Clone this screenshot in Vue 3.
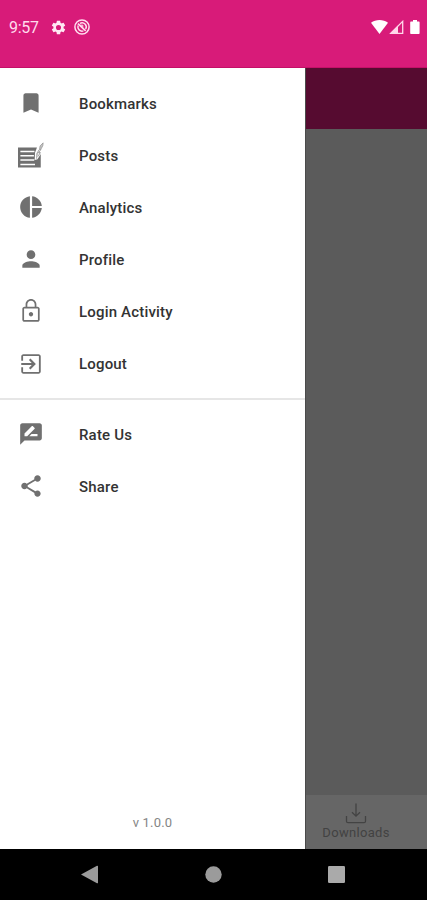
<template>
  <div class="screen">
    <header class="status-bar">
      <span class="clock">9:57</span>
      <svg class="gear" width="17" height="17" viewBox="0 0 24 24" fill="#ffe9f4"><path d="M19.14 12.94c.04-.3.06-.61.06-.94 0-.32-.02-.64-.07-.94l2.03-1.58a.49.49 0 0 0 .12-.61l-1.92-3.32a.49.49 0 0 0-.59-.22l-2.39.96a7.03 7.03 0 0 0-1.62-.94l-.36-2.54a.48.48 0 0 0-.48-.41h-3.84a.48.48 0 0 0-.47.41l-.36 2.54c-.59.24-1.13.57-1.62.94l-2.39-.96a.48.48 0 0 0-.59.22L2.74 8.87a.48.48 0 0 0 .12.61l2.03 1.58a6.2 6.2 0 0 0 0 1.88l-2.03 1.58a.49.49 0 0 0-.12.61l1.92 3.32c.12.22.37.29.59.22l2.39-.96c.5.38 1.03.7 1.62.94l.36 2.54c.05.24.24.41.48.41h3.84c.24 0 .44-.17.47-.41l.36-2.54a6.8 6.8 0 0 0 1.62-.94l2.39.96c.22.08.47 0 .59-.22l1.92-3.32a.48.48 0 0 0-.12-.61zM12 15.6a3.6 3.6 0 1 1 0-7.2 3.6 3.6 0 0 1 0 7.2z"/></svg>
      <svg class="dnd" width="16" height="16" viewBox="0 0 16 16" fill="none" stroke="#ffe0ef"><circle cx="8" cy="8" r="7.1" stroke-width="1.5"/><path d="M4.1 6.6a4.200 4.200 0 0 0 5.300 5.300M6 4.300a4.200 4.200 0 0 1 5.700 5.700" stroke-width="1.500"/><path d="M3.900 4.600l7.800 7.200" stroke-width="1.600"/><path d="M6.200 6.200h2.600v2.400z" stroke-width="1"/></svg>
      <div class="signals">
        <svg width="17" height="14" viewBox="0 0 17 14"><path d="M0 2.800C4.800-.9 12.200-.9 17 2.800L8.500 14z" fill="#fff"/></svg>
        <svg width="15" height="14" viewBox="0 0 15 14"><path d="M1.900 13.300L13.700 1.400v11.900z" fill="none" stroke="#ffd7ea" stroke-width="1.300"/><path d="M.5 14L9 5.500V14z" fill="#ffd7ea"/></svg>
        <svg class="battery" width="10" height="14" viewBox="0 0 10 14"><path d="M3 0h4v1.400h1.600c.6 0 1 .4 1 1V13c0 .6-.4 1-1 1H1.200c-.6 0-1-.4-1-1V2.400c0-.6.4-1 1-1H3z" fill="#fff"/></svg>
      </div>
    </header>

    <main class="content">
      <aside class="drawer">
        <nav>
          <a v-for="item in mainItems" :key="item.label" class="item">
            <svg class="icon" viewBox="0 0 24 24">
              <path :d="item.icon" fill-rule="evenodd" />
              <path v-if="item.quill" :d="item.quill" class="quill" />
            </svg>
            <span>{{ item.label }}</span>
          </a>
        </nav>
        <nav class="secondary">
          <a v-for="item in moreItems" :key="item.label" class="item">
            <svg class="icon" viewBox="0 0 24 24"><path :d="item.icon" fill-rule="evenodd" /></svg>
            <span>{{ item.label }}</span>
          </a>
        </nav>
        <p class="version">v 1.0.0</p>
      </aside>
      <section class="behind">
        <div class="toolbar"></div>
        <div class="page"></div>
        <div class="tab">
          <svg width="22" height="21" viewBox="0 0 22 21" fill="none" stroke="#434343" stroke-width="1.300"><path d="M11 .5v12.500M7 9.200l4 4 4-4M1.500 13v5.200c0 1 .5 1.500 1.500 1.500h16c1 0 1.500-.5 1.500-1.500V13"/></svg>
          <span>Downloads</span>
        </div>
      </section>
    </main>

    <footer class="nav-bar">
      <svg width="17" height="19" viewBox="0 0 17 19"><path d="M0 9.500L16 .8c.5-.3 1 0 1 .5v16.400c0 .5-.5.8-1 .5z"/></svg>
      <svg width="17" height="17" viewBox="0 0 17 17"><circle cx="8.500" cy="8.500" r="8.200"/></svg>
      <svg width="17" height="17" viewBox="0 0 17 17"><rect width="17" height="17" rx="1.200" fill="#aaa"/></svg>
    </footer>
  </div>
</template>

<script setup>
const mainItems = [
  { label: 'Bookmarks', icon: 'M17 3H7c-1.100 0-1.990.9-1.990 2L5 21l7-3 7 3V5c0-1.100-.9-2-2-2z' },
  {
    label: 'Posts',
    icon: 'M0 5h17.500l-1.800 5-.3 6.500L18 16l3-5v12.500H0zM2.200 8v1.400h13V8zM2.200 12v1.400h12.500V12zM2.200 16v1.400h12.800V16zM2.200 20v1.400h13.500V20z',
    quill: 'M17.200 15.500l.2-5 2.200-3.500M18.300 13.500l2.400-3.700-1.800.2 2.400-3.300-1.400.3.500-3.400L23.200.8l-.3 2.500-1.500 3',
  },
  { label: 'Analytics', icon: 'M11 2v20c-5.070-.5-9-4.790-9-10s3.930-9.500 9-10zm2.030 0v8.990H22c-.47-4.740-4.240-8.520-8.970-8.990zm0 11.010V22c4.740-.47 8.500-4.250 8.970-8.990h-8.970z' },
  { label: 'Profile', icon: 'M12 12c2.210 0 4-1.790 4-4s-1.790-4-4-4-4 1.790-4 4 1.790 4 4 4zm0 2c-2.670 0-8 1.340-8 4v2h16v-2c0-2.660-5.330-4-8-4z' },
  {
    label: 'Login Activity',
    icon: 'M18 8h-1V6c0-2.760-2.240-5-5-5S7 3.240 7 6v2H6c-1.100 0-2 .9-2 2v10c0 1.100.9 2 2 2h12c1.100 0 2-.9 2-2V10c0-1.100-.9-2-2-2zM8.600 6c0-1.880 1.520-3.400 3.400-3.400S15.400 4.120 15.400 6v2H8.600zM18.400 20.400H5.600V9.600h12.800zM12 17c1.100 0 2-.9 2-2s-.9-2-2-2-2 .9-2 2 .9 2 2 2z',
  },
  {
    label: 'Logout',
    icon: 'M10.090 15.590L11.500 17l5-5-5-5-1.410 1.410L12.670 11H3v2h9.670l-2.580 2.590zM19 3H5c-1.110 0-2 .9-2 2v4h1.700V4.700h14.600v14.600H4.700V15H3v4c0 1.100.89 2 2 2h14c1.100 0 2-.9 2-2V5c0-1.100-.9-2-2-2z',
  },
]

const moreItems = [
  { label: 'Rate Us', icon: 'M20 2H4c-1.100 0-1.990.9-1.990 2L2 22l4-4h14c1.100 0 2-.9 2-2V4c0-1.100-.9-2-2-2zM6 14v-2.470l6.880-6.880c.2-.2.510-.2.710 0l1.770 1.770c.2.2.2.510 0 .710L8.470 14H6zm12 0h-7.500l2-2H18v2z' },
  {
    label: 'Share',
    icon: 'M18 16.080c-.76 0-1.440.3-1.960.770L8.910 12.700c.05-.23.090-.46.090-.7s-.04-.47-.09-.7l7.050-4.110c.54.5 1.250.810 2.040.810 1.660 0 3-1.340 3-3s-1.340-3-3-3-3 1.340-3 3c0 .24.040.47.090.7L8.040 9.810C7.500 9.310 6.790 9 6 9c-1.660 0-3 1.340-3 3s1.340 3 3 3c.79 0 1.500-.31 2.040-.81l7.120 4.160c-.05.21-.08.43-.08.650 0 1.610 1.310 2.920 2.920 2.920s2.920-1.310 2.920-2.920-1.310-2.920-2.920-2.920z',
  },
]
</script>

<style>
body { margin: 0; }
</style>

<style scoped>
.screen {
  display: flex;
  flex-direction: column;
  height: 900px;
  overflow: hidden;
  font-family: Roboto, "Liberation Sans", sans-serif;
  background: #fff;
}

.status-bar {
  display: flex;
  align-items: center;
  box-sizing: border-box;
  height: 68px;
  padding: 0 7px 13px 9px;
  background: #d81b79;
  border-bottom: 1px solid #c41068;
}
.clock { width: 41px; padding-top: 1px; font-size: 16px; letter-spacing: -0.3px; color: #ffdced; }
.dnd { margin-left: 7px; }
.signals { display: flex; margin-left: auto; gap: 1px; }
.battery { margin-left: 5px; }

.content { display: flex; flex: 1; min-height: 0; }

.drawer {
  display: flex;
  flex-direction: column;
  box-sizing: border-box;
  width: 305px;
  padding-top: 9px;
  background: #fff;
}
.item {
  display: flex;
  align-items: center;
  gap: 35px;
  height: 52.1px;
  padding-left: 18px;
  font-size: 15px;
  font-weight: 500;
  letter-spacing: 0.18px;
  color: #333;
}
.item span { padding-top: 1px; }
.icon { width: 26px; height: 26px; fill: #707070; }
.quill { fill: #c4c4c4; stroke: #929292; stroke-width: 0.7; }
.secondary { margin-top: 8.400px; padding-top: 8px; border-top: 2px solid #e6e6e6; }
.version {
  margin: auto 0 18px;
  text-align: center;
  font-size: 13px;
  line-height: 16px;
  letter-spacing: 0.2px;
  color: #858585;
}

.behind {
  display: flex;
  flex: 1;
  flex-direction: column;
  border-left: 1px solid #4a4a4a;
}
.toolbar { height: 61px; background: #560b30; }
.page { flex: 1; background: #5b5b5b; }
.tab {
  display: flex;
  flex-direction: column;
  align-items: center;
  box-sizing: border-box;
  height: 54px;
  padding: 8px 21px 0 0;
  background: #666;
  font-size: 13px;
  line-height: 18px;
  letter-spacing: 0.3px;
  color: #424242;
}

.nav-bar {
  display: flex;
  align-items: center;
  justify-content: space-between;
  box-sizing: border-box;
  height: 51px;
  padding: 0 82px 0 81px;
  background: #000;
  fill: #9b9b9b;
}
</style>
